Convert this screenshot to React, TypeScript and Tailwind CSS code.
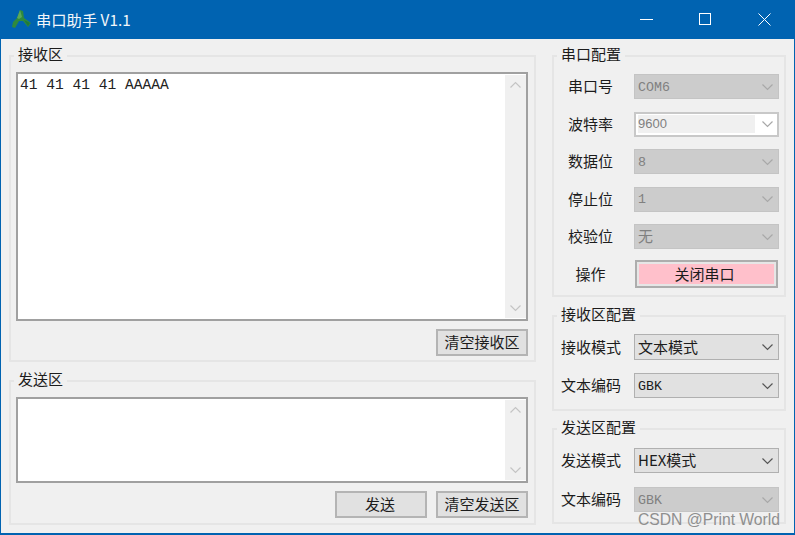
const cjk = "font-['Noto_Sans_CJK_SC',sans-serif]";

const Chevron = ({ color = '#6a6a6a', up = false }: { color?: string; up?: boolean }) => (
    <svg width="13" height="8" viewBox="0 0 13 8" fill="none">
        <path d={up ? 'M1.5 6.5 L6.5 1.5 L11.5 6.5' : 'M1.5 1.5 L6.5 6.5 L11.5 1.5'} stroke={color} strokeWidth="1.2" />
    </svg>
);

const Group = ({ title, className, children }: { title: string; className: string; children: React.ReactNode }) => (
    <fieldset className={`border-2 border-[#e5e5e5] ${className}`}>
        <legend className="ml-[3px] h-5 px-1 text-[15px] leading-5 text-[#1c1c1c]">
            <span className="relative -top-[2px]">{title}</span>
        </legend>
        {children}
    </fieldset>
);

const Button = ({ label, className }: { label: string; className: string }) => (
    <div className={`flex items-center justify-center border-2 border-[#b4b4b4] bg-[#e1e1e1] text-[15px] text-[#1c1c1c] ${className}`}>
        {label}
    </div>
);

// 下拉框: normal / disabled
const Combo = ({ value, disabled, h = 'h-[25px]', mono = false }: { value: string; disabled?: boolean; h?: string; mono?: boolean }) => (
    <div className={`flex w-[145px] items-center justify-between pl-[3px] pr-[4px] border ${h} ${disabled ? 'border-[#c4c4c4] bg-[#cccccc] text-[#808080]' : 'border-[#b0b0b0] bg-[#e1e1e1] text-[#1c1c1c]'}`}>
        <span className={`${mono ? "font-['Liberation_Mono',monospace] text-[13.3px] top-px" : 'text-[15px] -top-px'} relative leading-none`}>{value}</span>
        <Chevron color={disabled ? '#a8a8a8' : '#555555'} />
    </div>
);

const TextBox = ({ text, className }: { text?: string; className: string }) => (
    <div className={`flex justify-between border-2 border-[#a0a0a0] bg-white ${className}`}>
        <div className="pl-[2px] pt-[3px] font-['Liberation_Mono',monospace] text-[14.6px] leading-[16px] whitespace-pre text-[#222222]">{text}</div>
        <div className="my-px flex w-[21px] flex-col items-center justify-between bg-[#f0f0f0] py-[6px]">
            <Chevron color="#c4c4c4" up />
            <Chevron color="#c4c4c4" />
        </div>
    </div>
);

const SerialRow = ({ label, value, mono }: { label: string; value: string; mono?: boolean }) => (
    <div className="flex items-center">
        <span className="w-[73px] text-center text-[15px] text-[#1c1c1c]">{label}</span>
        <div className="ml-[7px]"><Combo value={value} disabled mono={mono} /></div>
    </div>
);

const ConfigRow = ({ label, children }: { label: string; children: React.ReactNode }) => (
    <div className="flex items-center pl-[7px]">
        <span className="w-[60px] text-[15px] text-[#1c1c1c]">{label}</span>
        <div className="ml-[13px]">{children}</div>
    </div>
);

export default function App() {
    return (
        <div className={`relative flex h-[535px] w-[795px] flex-col overflow-hidden border-x border-b-2 border-[#0063b1] bg-[#f0f0f0] ${cjk}`}>
            {/* 标题栏 */}
            <div className="-mx-px flex h-[39px] shrink-0 items-center bg-[#0063b1]">
                <svg className="ml-[11px]" width="20" height="19" viewBox="0 0 20 19">
                    <path d="M9 0 L12 1 L13 8 L20 13 L17 17 L12 11 L8 11 L4 18 L1 17 L2 12 L6 8 Z" fill="#2f8a3e" />
                    <path d="M9 0 L11 7 L8 9 L6 8 Z" fill="#5aa85a" />
                    <path d="M13 10 L19 13 L17 16 Z" fill="#1f7a3a" />
                </svg>
                <span className="ml-[5px] text-[15.3px] text-[#f2f6fa]">串口助手 V1.1</span>
                <div className="ml-auto flex items-center text-white">
                    <svg width="13" height="13" viewBox="0 0 13 13" className="mr-[46px]"><path d="M0 6.5 H13" stroke="#fff" /></svg>
                    <svg width="13" height="13" viewBox="0 0 13 13" className="mr-[46px]"><rect x="0.5" y="0.5" width="11" height="11" fill="none" stroke="#fff" /></svg>
                    <svg width="13" height="13" viewBox="0 0 13 13" className="mr-[24px]"><path d="M0.5 0.5 L12.5 12.5 M12.5 0.5 L0.5 12.5" stroke="#fff" /></svg>
                </div>
            </div>

            <div className="flex pl-[8px] pt-[7px]">
                {/* 左侧 */}
                <div className="flex w-[527px] flex-col gap-[9px]">
                    <Group title="接收区" className="h-[316px]">
                        <div className="pl-[5px] pr-[6px] pt-[6px]">
                            <TextBox text="41 41 41 41 AAAAA" className="h-[249px]" />
                            <div className="mt-[8px] flex justify-end">
                                <Button label="清空接收区" className="h-[27px] w-[92px]" />
                            </div>
                        </div>
                    </Group>
                    <Group title="发送区" className="h-[154px]">
                        <div className="pl-[5px] pr-[6px] pt-[6px]">
                            <TextBox className="h-[86px]" />
                            <div className="mt-[8px] flex justify-end gap-[9px]">
                                <Button label="发送" className="h-[27px] w-[92px] pr-[2px]" />
                                <Button label="清空发送区" className="h-[27px] w-[92px]" />
                            </div>
                        </div>
                    </Group>
                </div>

                {/* 右侧 */}
                <div className="ml-[16px] flex w-[234px] flex-col">
                    <Group title="串口配置" className="h-[251px] pt-[8px]">
                        <div className="flex flex-col gap-[12.5px]">
                            <SerialRow label="串口号" value="COM6" mono />
                            <div className="flex items-center">
                                <span className="w-[73px] text-center text-[15px] text-[#1c1c1c]">波特率</span>
                                <div className="ml-[7px] flex h-[25px] w-[145px] items-center justify-between border-2 border-[#c8c8c8] bg-white pl-[2px] pr-[3px]">
                                    <span className="flex h-[18px] w-[117px] items-center bg-[#f0f0f0] font-['Liberation_Sans',sans-serif] text-[13px] text-[#808080]">9600</span>
                                    <Chevron color="#a8a8a8" />
                                </div>
                            </div>
                            <SerialRow label="数据位" value="8" mono />
                            <SerialRow label="停止位" value="1" mono />
                            <SerialRow label="校验位" value="无" />
                        </div>
                        <div className="mt-[11px] flex items-center">
                            <span className="w-[73px] text-center text-[15px] text-[#1c1c1c]">操作</span>
                            <div className="ml-[8px] flex h-[28px] w-[143px] border-2 border-[#adadad] bg-[#e6e6e6] p-[2px]">
                                <div className="flex flex-1 items-center justify-center bg-[#ffc0cb] pr-[4px] text-[15px] text-[#1c1c1c]">关闭串口</div>
                            </div>
                        </div>
                    </Group>
                    <Group title="接收区配置" className="mt-[9px] h-[105px] pt-[8px]">
                        <div className="flex flex-col gap-[13px]">
                            <ConfigRow label="接收模式"><Combo value="文本模式" h="h-[26px]" /></ConfigRow>
                            <ConfigRow label="文本编码"><Combo value="GBK" mono /></ConfigRow>
                        </div>
                    </Group>
                    <Group title="发送区配置" className="mt-[8px] h-[105px] pt-[9px]">
                        <div className="flex flex-col gap-[14px]">
                            <ConfigRow label="发送模式"><Combo value="HEX模式" /></ConfigRow>
                            <ConfigRow label="文本编码"><Combo value="GBK" disabled mono /></ConfigRow>
                        </div>
                    </Group>
                </div>
            </div>

            {/* 水印 */}
            <span className="absolute left-[637px] top-[511px] font-['Liberation_Sans',sans-serif] text-[15.7px] leading-[18px] text-[#8f8f8f]">CSDN @Print World</span>
        </div>
    );
}
